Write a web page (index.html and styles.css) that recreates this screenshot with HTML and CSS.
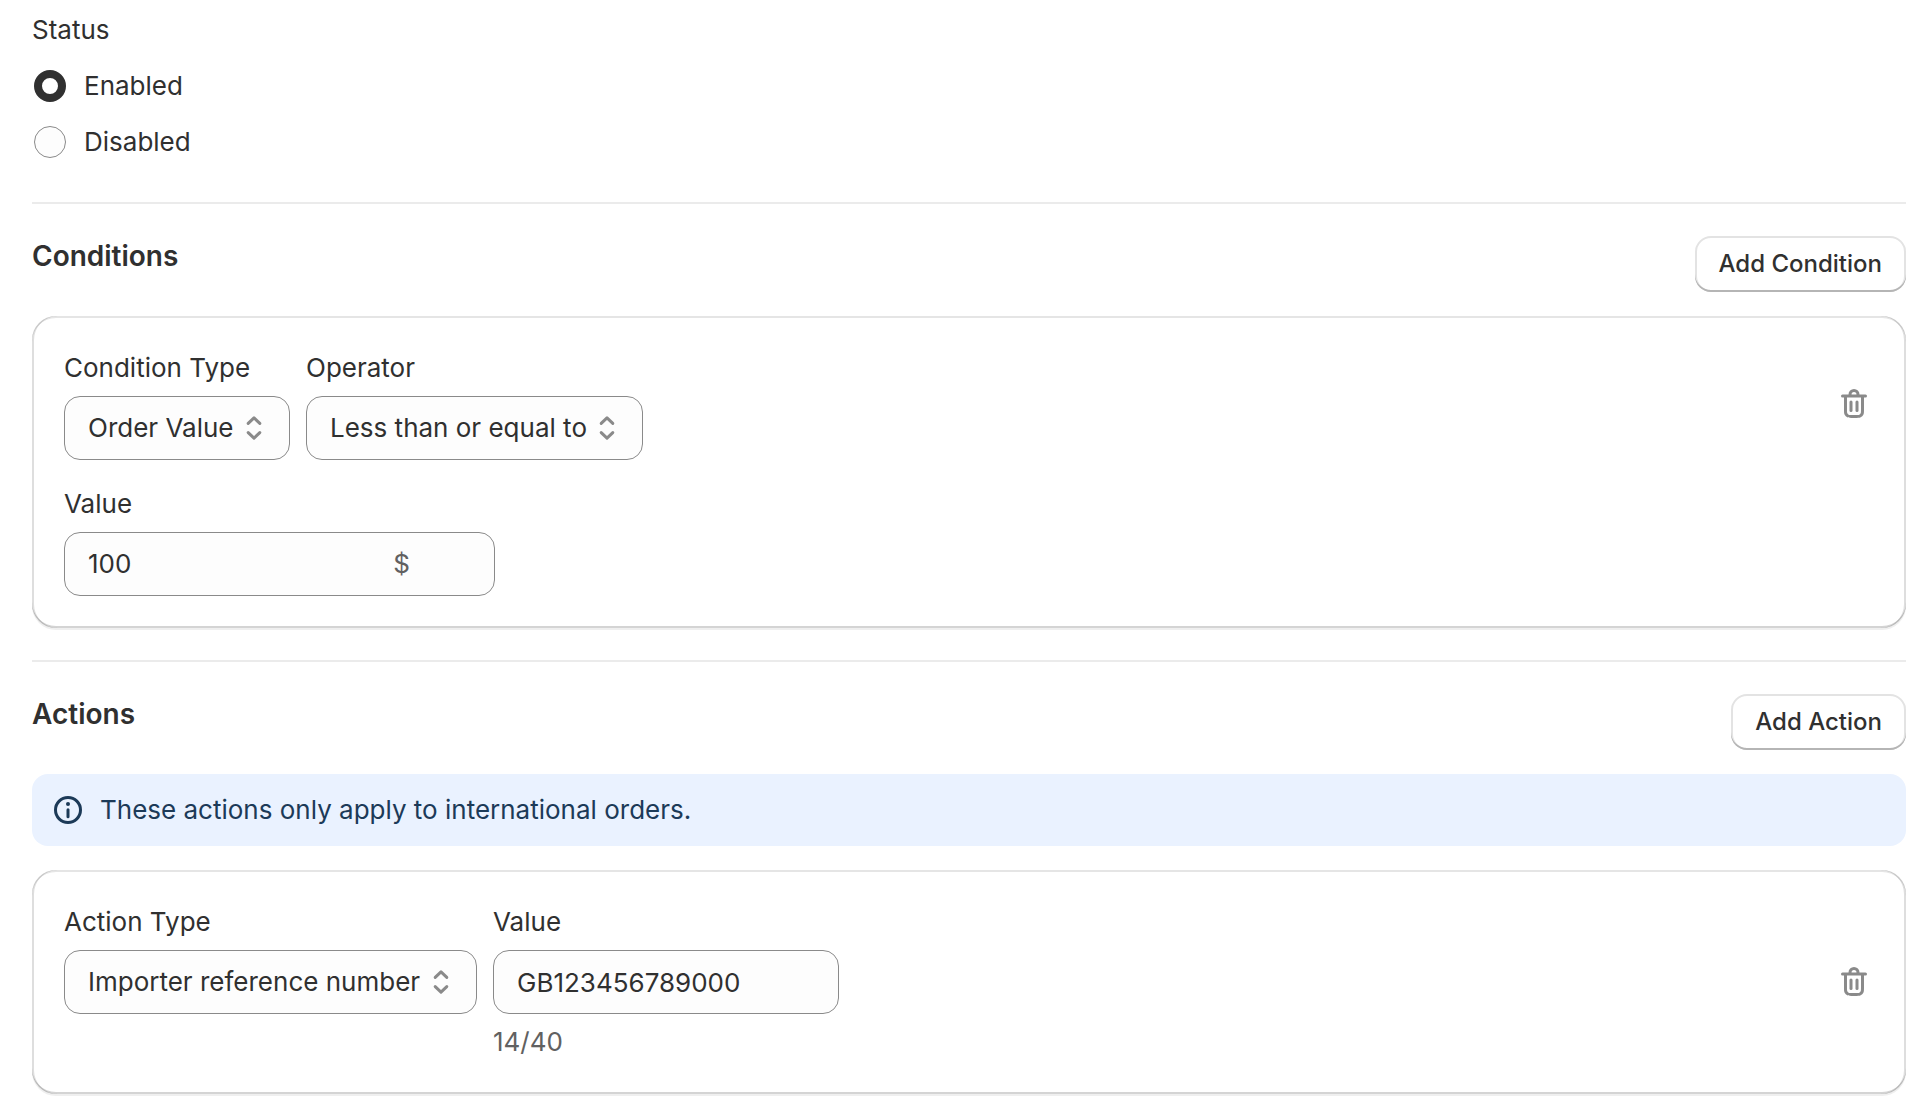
FILE: index.html
```html
<!DOCTYPE html>
<html lang="en">
<head>
  <meta charset="utf-8">
  <meta name="viewport" content="width=device-width, initial-scale=1">
  <title>Edit rule</title>
  <link rel="stylesheet" href="styles.css">
</head>
<body>
  <svg class="sprite" aria-hidden="true">
    <symbol id="icon-delete" viewBox="0 0 20 20">
      <path d="M11.5 8.25a.75.75 0 0 1 .75.75v4.25a.75.75 0 0 1-1.5 0v-4.25a.75.75 0 0 1 .75-.75Z"/>
      <path d="M9.25 9a.75.75 0 0 0-1.5 0v4.25a.75.75 0 0 0 1.5 0v-4.25Z"/>
      <path fill-rule="evenodd" d="M7.25 5.25a2.75 2.75 0 0 1 5.5 0h3a.75.75 0 0 1 0 1.5h-.75v5.45c0 1.68 0 2.52-.327 3.162a3 3 0 0 1-1.311 1.311c-.642.327-1.482.327-3.162.327h-.4c-1.68 0-2.52 0-3.162-.327a3 3 0 0 1-1.311-1.311c-.327-.642-.327-1.482-.327-3.162v-5.45h-.75a.75.75 0 0 1 0-1.5h3Zm1.5 0a1.25 1.25 0 1 1 2.5 0h-2.5Zm-2.25 1.5h7v5.45c0 .865-.001 1.423-.036 1.848-.033.408-.09.559-.128.633a1.5 1.5 0 0 1-.655.655c-.074.038-.225.095-.633.128-.425.035-.983.036-1.848.036h-.4c-.865 0-1.423-.001-1.848-.036-.408-.033-.559-.09-.633-.128a1.5 1.5 0 0 1-.656-.655c-.037-.074-.094-.225-.127-.633-.035-.425-.036-.983-.036-1.848v-5.45Z"/>
    </symbol>
    <symbol id="icon-select" viewBox="0 0 20 20">
      <path d="M7.1 7.7 10 4.9l2.9 2.8M7.1 12.3l2.9 2.8 2.9-2.8" fill="none" stroke="currentColor" stroke-width="1.5" stroke-linecap="round" stroke-linejoin="round"/>
    </symbol>
    <symbol id="icon-info" viewBox="0 0 20 20">
      <circle cx="10" cy="10" r="6.25" fill="none" stroke="currentColor" stroke-width="1.5"/>
      <circle cx="10" cy="7" r="1"/>
      <path d="M10 9.9v3.5" fill="none" stroke="currentColor" stroke-width="1.5" stroke-linecap="round"/>
    </symbol>
  </svg>

  <main class="page">
    <fieldset class="choices">
      <legend class="choices-title">Status</legend>
      <label class="choice"><input class="radio" type="radio" name="status" value="enabled" checked>Enabled</label>
      <label class="choice"><input class="radio" type="radio" name="status" value="disabled">Disabled</label>
    </fieldset>

    <section class="section">
      <header class="section-header">
        <h2 class="section-title">Conditions</h2>
        <button class="button" type="button">Add Condition</button>
      </header>
      <div class="card">
        <div class="card-row">
          <div class="fields">
            <div class="field">
              <label for="condition-type">Condition Type</label>
              <div class="select">
                <select class="control select-control" id="condition-type"><option>Order Value</option></select>
                <svg class="icon select-icon" aria-hidden="true"><use href="#icon-select"/></svg>
              </div>
            </div>
            <div class="field">
              <label for="operator">Operator</label>
              <div class="select">
                <select class="control select-control" id="operator"><option>Less than or equal to</option></select>
                <svg class="icon select-icon" aria-hidden="true"><use href="#icon-select"/></svg>
              </div>
            </div>
          </div>
          <button class="icon-button" type="button" aria-label="Remove condition">
            <svg class="icon" aria-hidden="true"><use href="#icon-delete"/></svg>
          </button>
        </div>
        <div class="field">
          <label for="condition-value">Value</label>
          <div class="control amount">
            <input class="amount-input" id="condition-value" type="text" inputmode="decimal" value="100">
            <span class="amount-suffix">$</span>
          </div>
        </div>
      </div>
    </section>

    <section class="section">
      <header class="section-header">
        <h2 class="section-title">Actions</h2>
        <button class="button" type="button">Add Action</button>
      </header>
      <div class="banner" role="status">
        <svg class="icon" aria-hidden="true"><use href="#icon-info"/></svg>
        <p class="banner-text">These actions only apply to international orders.</p>
      </div>
      <div class="card">
        <div class="card-row">
          <div class="fields">
            <div class="field">
              <label for="action-type">Action Type</label>
              <div class="select">
                <select class="control select-control" id="action-type"><option>Importer reference number</option></select>
                <svg class="icon select-icon" aria-hidden="true"><use href="#icon-select"/></svg>
              </div>
            </div>
            <div class="field">
              <label for="action-value">Value</label>
              <input class="control text-control" id="action-value" type="text" maxlength="40" value="GB123456789000" aria-describedby="action-count">
              <span class="count" id="action-count">14/40</span>
            </div>
          </div>
          <button class="icon-button" type="button" aria-label="Remove action">
            <svg class="icon" aria-hidden="true"><use href="#icon-delete"/></svg>
          </button>
        </div>
      </div>
    </section>
  </main>
</body>
</html>
```
FILE: styles.css
```css
:root {
  --text: #303030;
  --text-secondary: #616161;
  --icon: #8a8a8a;
  --divider: #ebebeb;
  --field: #fdfdfd;
}

*,
*::before,
*::after {
  box-sizing: border-box;
}

body {
  margin: 0;
  background: #fff;
  color: var(--text);
  font: 400 26px/40px Inter, "Liberation Sans", sans-serif;
}

button,
input,
select {
  margin: 0;
  font: inherit;
  color: inherit;
}

.sprite {
  display: none;
}

.page {
  padding: 10px 24px 12px 32px;
}

.icon {
  display: block;
  flex: none;
  width: 40px;
  height: 40px;
  fill: currentColor;
}

/* Status */

.choices {
  margin: 0 0 32px;
  padding: 0;
  border: 0;
}

.choices-title {
  margin-bottom: 8px;
  padding: 0;
}

.choice {
  display: flex;
  align-items: center;
  gap: 18px;
  width: fit-content;
  padding: 8px 2px;
}

.radio {
  appearance: none;
  width: 32px;
  height: 32px;
  border: 1px solid var(--icon);
  border-radius: 50%;
  background: var(--field);
}

.radio:checked {
  border: 8px solid var(--text);
  background: #fff;
}

/* Sections */

.section {
  display: flex;
  flex-direction: column;
  gap: 24px;
  padding: 32px 0;
  border-top: 2px solid var(--divider);
}

.section:last-child {
  padding-bottom: 0;
}

.section-header {
  display: flex;
  align-items: flex-start;
  justify-content: space-between;
}

.section-title {
  margin: 0;
  font-size: 28px;
  line-height: 40px;
  font-weight: 600;
}

.button {
  padding: 8px 24px;
  border: 0;
  border-radius: 16px;
  background: #fff;
  box-shadow: inset 0 -2px 0 #b5b5b5, inset 0 0 0 2px #e3e3e3;
  font-size: 24px;
  line-height: 40px;
  font-weight: 550;
}

.card {
  display: flex;
  flex-direction: column;
  gap: 24px;
  padding: 32px;
  border-radius: 24px;
  box-shadow:
    0 2px 0 rgba(26, 26, 26, 0.07),
    inset 2px 0 0 rgba(0, 0, 0, 0.13),
    inset -2px 0 0 rgba(0, 0, 0, 0.13),
    inset 0 -2px 0 rgba(0, 0, 0, 0.17),
    inset 0 2px 0 rgba(204, 204, 204, 0.5);
}

.card-row {
  display: flex;
  align-items: center;
  justify-content: space-between;
}

.fields {
  display: flex;
  align-items: flex-start;
  gap: 16px;
}

.field {
  display: flex;
  flex-direction: column;
  align-items: flex-start;
  gap: 8px;
}

.control {
  height: 64px;
  border: 1px solid var(--icon);
  border-radius: 16px;
  background: var(--field);
}

.select {
  position: relative;
}

.select-control {
  display: block;
  appearance: none;
  padding: 0 55px 0 23px;
}

.select-icon {
  position: absolute;
  top: 12px;
  right: 16px;
  color: var(--icon);
  pointer-events: none;
}

.text-control {
  width: 346px;
  padding: 0 23px;
}

.amount {
  display: flex;
  align-items: center;
  width: 431px;
  padding: 0 84px 0 23px;
}

.amount-input {
  flex: 1;
  min-width: 0;
  padding: 0;
  border: 0;
  outline: 0;
  background: none;
}

.amount-suffix,
.count {
  color: var(--text-secondary);
}

.icon-button {
  padding: 0;
  border: 0;
  background: none;
  color: var(--icon);
}

.banner {
  display: flex;
  align-items: center;
  gap: 12px;
  padding: 16px;
  border-radius: 16px;
  background: #eaf2ff;
  color: #1c3a58;
}

.banner-text {
  margin: 0;
}
```
